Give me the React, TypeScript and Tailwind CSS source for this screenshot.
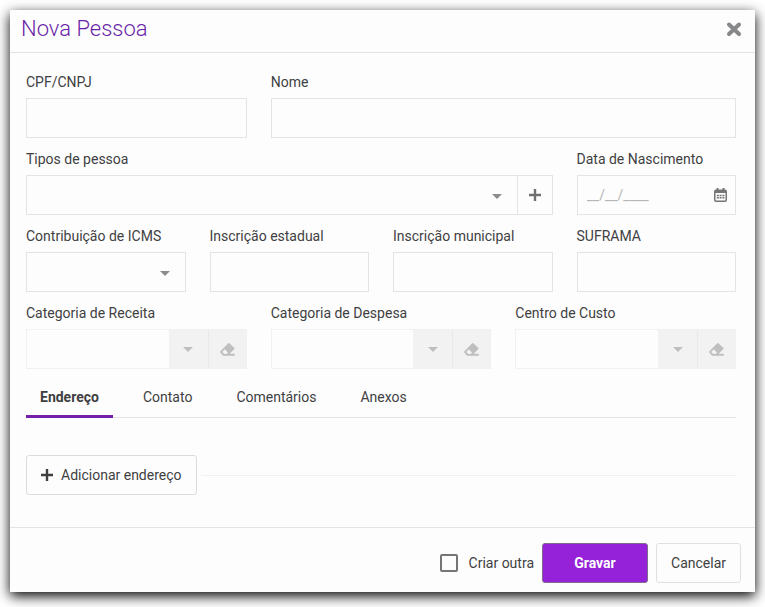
import type { ReactNode } from "react";

const box = "h-10 w-full min-w-0 border border-[#e4e4e6] bg-[#fdfdfd] px-2 outline-none";

const Caret = ({ className = "" }: { className?: string }) => (
  <svg className={`pointer-events-none h-[5px] w-[10px] ${className}`} viewBox="0 0 10 5" fill="currentColor">
    <path d="M0 0h10L5 5z" />
  </svg>
);

const Plus = () => (
  <svg className="h-3 w-3" viewBox="0 0 12 12" stroke="currentColor" strokeWidth="2.4">
    <path d="M6 0v12M0 6h12" />
  </svg>
);

const Close = () => (
  <svg className="h-4 w-4" viewBox="0 0 16 16" stroke="currentColor" strokeWidth="4" strokeLinecap="round">
    <path d="M3 3.5l10 9.5M13 3.5L3 13" />
  </svg>
);

const Eraser = () => (
  <svg className="h-[13px] w-[15px]" viewBox="0 0 15 13" fill="currentColor">
    <path
      fillRule="evenodd"
      d="M8 0.4Q8.8-.2 9.6 .5L14.2 4.7Q15 5.5 14.2 6.3L9.6 10.8H14.8V12.8H4Q3.2 12.8 2.6 12.2L.6 10.1Q-.3 9 .6 7.9zM4.7 6.3L2.3 8.9L4.3 10.9H6.6L8 9.4z"
    />
  </svg>
);

const Calendar = () => (
  <svg className="h-[14px] w-[13px]" viewBox="0 0 13 14" fill="none" stroke="currentColor">
    <rect x="0.75" y="2.25" width="11.5" height="11" rx="1.2" strokeWidth="1.5" />
    <path d="M1 3.5h11" strokeWidth="3" />
    <path d="M3.5 0v3M9.5 0v3" strokeWidth="2" />
    <path d="M2.8 7.5h7.6M2.8 9.8h7.6" strokeWidth="1.6" strokeDasharray="2 0.8" />
  </svg>
);

const Field = ({ id, label, span, children }: { id: string; label: string; span: string; children?: ReactNode }) => (
  <div className={span}>
    <label htmlFor={id} className="mb-1 block leading-6">
      {label}
    </label>
    {children ?? <input id={id} type="text" className={`${box} block`} />}
  </div>
);

const Lookup = ({ id, label }: { id: string; label: string }) => (
  <Field id={id} label={label} span="col-span-4">
    <div className="flex h-10 border border-[#f1f1f1] text-[#bfbfbf]">
      <input id={id} type="text" disabled className="min-w-0 flex-1 bg-[#fdfdfd] px-2" />
      <button type="button" disabled aria-label={`Abrir ${label}`} className="flex w-[39px] items-center justify-center bg-[#f2f2f2] pt-px">
        <Caret />
      </button>
      <button type="button" disabled aria-label={`Limpar ${label}`} className="flex w-[38px] items-center justify-center border-l border-[#e9e9e9] bg-[#f2f2f2]">
        <Eraser />
      </button>
    </div>
  </Field>
);

const tabs = ["Endereço", "Contato", "Comentários", "Anexos"];

const App = () => {
  return (
    <div className="bg-white p-[10px] pb-[15px] font-[Roboto,sans-serif] text-sm text-[#3f3f42]">
      <form
        role="dialog"
        aria-labelledby="titulo"
        className="bg-[#fdfdfd] shadow-[0_4px_12px_rgba(0,0,0,1)]"
        onSubmit={(e) => e.preventDefault()}
      >
        {/* Cabeçalho */}
        <header className="flex items-center justify-between border-b border-[#e4e4e6] pt-1 pr-[13px] pb-2 pl-[11px]">
          <h1 id="titulo" className="text-[22px] leading-[30px] font-light text-[#6a1fa8]">
            Nova Pessoa
          </h1>
          <button type="button" aria-label="Fechar" className="text-[#858789]">
            <Close />
          </button>
        </header>

        {/* Dados da pessoa */}
        <div className="pt-[17px] pr-[19px] pb-8 pl-4">
          <div className="grid grid-cols-12 gap-x-6 gap-y-[9px]">
            <Field id="cpf" label="CPF/CNPJ" span="col-span-4" />
            <Field id="nome" label="Nome" span="col-span-8" />

            <Field id="tipos" label="Tipos de pessoa" span="col-span-9">
              <div className="flex">
                <div className="relative min-w-0 flex-1">
                  <select id="tipos" className={`${box} block appearance-none`} />
                  <Caret className="absolute top-[19px] right-4 text-[#8c8c8c]" />
                </div>
                <button type="button" aria-label="Adicionar tipo" className="flex w-[35px] items-center justify-center border border-l-0 border-[#e4e4e6] text-[#6f6f6f]">
                  <Plus />
                </button>
              </div>
            </Field>
            <Field id="nascimento" label="Data de Nascimento" span="col-span-3">
              <div className="flex h-10 items-center border border-[#e4e4e6] pr-2 pl-[9px]">
                <input id="nascimento" type="text" placeholder="__/__/____" className="min-w-0 flex-1 outline-none placeholder:text-[#b5b5b5]" />
                <button type="button" aria-label="Abrir calendário" className="text-[#757575]">
                  <Calendar />
                </button>
              </div>
            </Field>

            <Field id="icms" label="Contribuição de ICMS" span="col-span-3">
              <div className="relative">
                <select id="icms" className={`${box} block appearance-none`} />
                <Caret className="absolute top-[19px] right-4 text-[#8c8c8c]" />
              </div>
            </Field>
            <Field id="estadual" label="Inscrição estadual" span="col-span-3" />
            <Field id="municipal" label="Inscrição municipal" span="col-span-3" />
            <Field id="suframa" label="SUFRAMA" span="col-span-3" />

            <Lookup id="receita" label="Categoria de Receita" />
            <Lookup id="despesa" label="Categoria de Despesa" />
            <Lookup id="custo" label="Centro de Custo" />
          </div>

          {/* Abas */}
          <div role="tablist" className="mt-[10px] flex gap-4 border-b border-[#e4e4e6]">
            {tabs.map((tab, i) => (
              <button
                key={tab}
                type="button"
                role="tab"
                aria-selected={i === 0}
                className={
                  i === 0
                    ? "-mb-px h-[39px] border-b-3 border-[#7420ab] px-[14px] font-bold"
                    : "-mb-px h-[39px] border-b-3 border-transparent px-[14px]"
                }
              >
                {tab}
              </button>
            ))}
          </div>

          <div className="mt-[37px] flex items-center gap-1">
            <button type="button" className="flex h-10 items-center gap-2 rounded-[3px] border border-[#dcdcde] px-[14px]">
              <Plus />
              Adicionar endereço
            </button>
            <hr className="flex-1 border-[#f0f0f0]" />
          </div>
        </div>

        {/* Rodapé */}
        <footer className="flex items-center justify-end gap-2 border-t border-[#e4e4e6] pt-[15px] pr-[14px] pb-[9px]">
          <label className="flex items-center gap-[11px]">
            <input type="checkbox" className="h-[18px] w-[18px] appearance-none rounded-[2px] border-2 border-[#757575] checked:bg-[#9522d8]" />
            Criar outra
          </label>
          <button type="submit" className="h-10 w-[106px] rounded-[3px] border border-[#7d6a8c] bg-[#9522d8] font-bold text-white">
            Gravar
          </button>
          <button type="button" className="h-10 rounded-[3px] border border-[#e0e0e3] px-[14px]">
            Cancelar
          </button>
        </footer>
      </form>
    </div>
  );
};

export default App;
